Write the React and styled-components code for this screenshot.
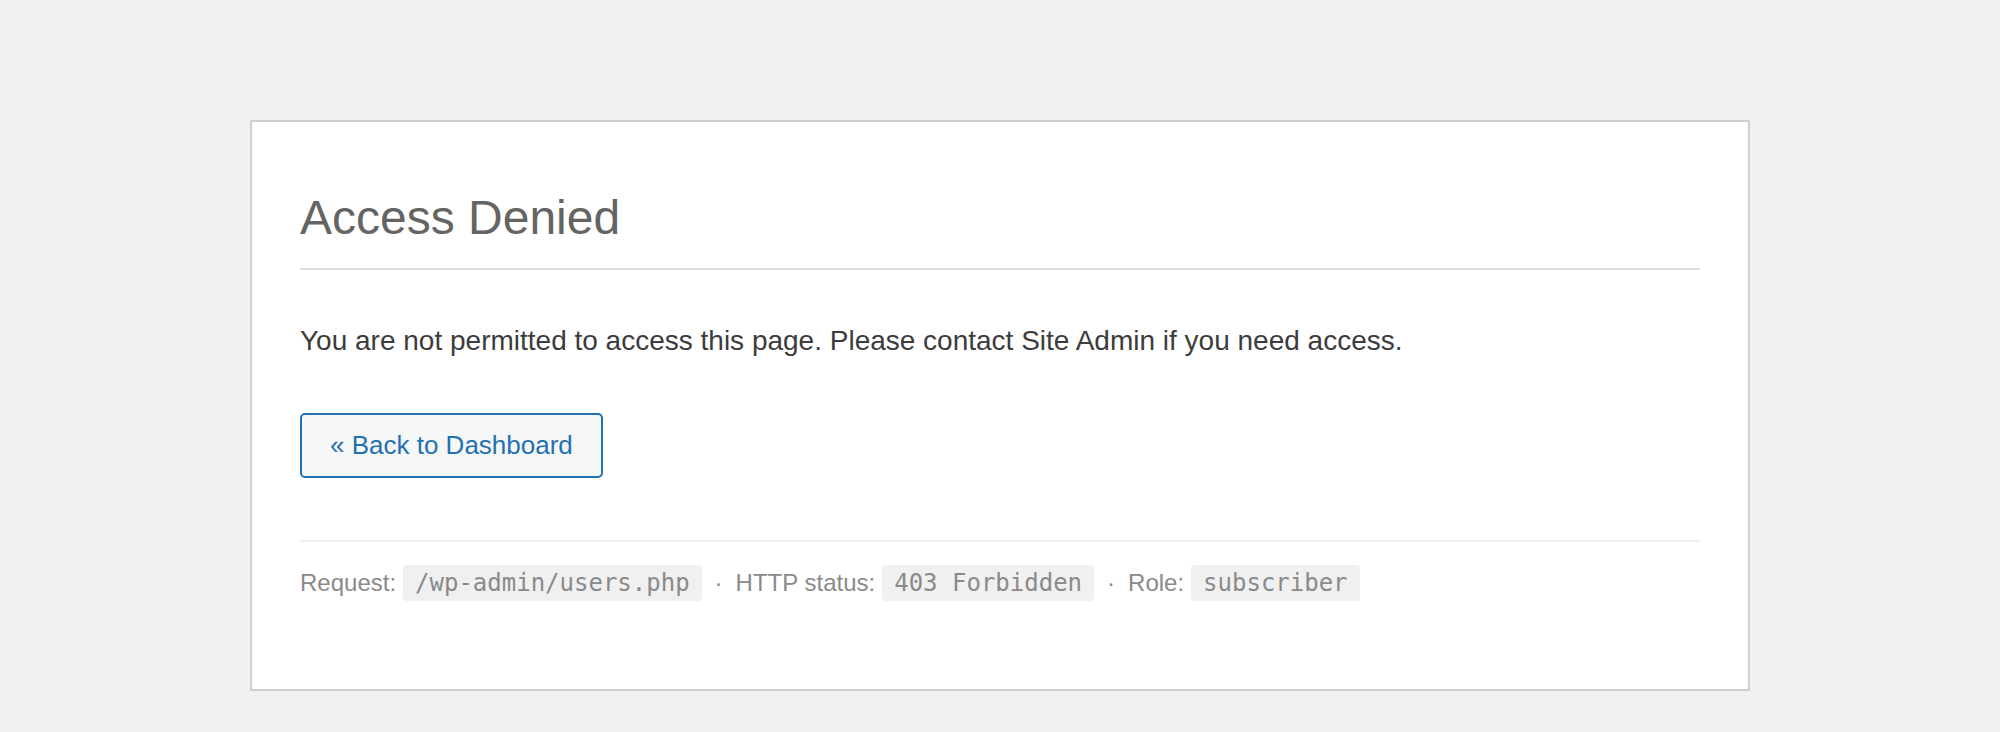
import React from "react";
import styled, { createGlobalStyle } from "styled-components";

const GlobalStyle = createGlobalStyle`
  html {
    background: #f1f1f1;
  }
  body {
    margin: 0;
    background: #f1f1f1;
    font-family: "Liberation Sans", Arial, sans-serif;
  }
`;

const Page = styled.div`
  display: flex;
  justify-content: center;
  padding-top: 120px;
`;

const Card = styled.main`
  box-sizing: border-box;
  width: 1500px;
  background: #fff;
  border: 2px solid #ccd0d4;
  padding: 68px 48px 88px;
`;

const Title = styled.h1`
  margin: 0;
  padding-bottom: 22px;
  border-bottom: 2px solid #dcdcde;
  font-size: 48px;
  line-height: 56px;
  font-weight: 400;
  color: #646464;
`;

const Message = styled.p`
  margin: 50px 0 51px;
  font-size: 28px;
  line-height: 42px;
  color: #3c3c3c;
`;

const BackButton = styled.a`
  box-sizing: border-box;
  display: inline-flex;
  align-items: center;
  height: 65px;
  padding: 0 28px;
  border: 2px solid #2271b1;
  border-radius: 5px;
  background: #f6f7f7;
  color: #2271b1;
  font-size: 26px;
  text-decoration: none;
  cursor: pointer;
`;

const Meta = styled.footer`
  margin-top: 62px;
  padding-top: 23px;
  border-top: 2px solid #f0f0f0;
  font-size: 24px;
  line-height: 36px;
  color: #8a8a8a;
`;

const Code = styled.code`
  margin-left: 7px;
  padding: 4px 12px;
  border-radius: 4px;
  background: #f0f0f0;
  color: #8a8a8a;
  font-family: "DejaVu Sans Mono", monospace;
  font-size: 24px;
`;

const Sep = styled.span`
  margin: 0 13px;
`;

const details = [
  { label: "Request:", value: "/wp-admin/users.php" },
  { label: "HTTP status:", value: "403 Forbidden" },
  { label: "Role:", value: "subscriber" },
];

export default function App() {
  return (
    <>
      <GlobalStyle />
      <Page>
        <Card>
          <Title>Access Denied</Title>
          <Message>
            You are not permitted to access this page. Please contact Site Admin if you need access.
          </Message>
          <BackButton href="#">« Back to Dashboard</BackButton>
          <Meta>
            {details.map((d, i) => (
              <React.Fragment key={d.label}>
                {i > 0 && <Sep>·</Sep>}
                {d.label}
                <Code>{d.value}</Code>
              </React.Fragment>
            ))}
          </Meta>
        </Card>
      </Page>
    </>
  );
}
